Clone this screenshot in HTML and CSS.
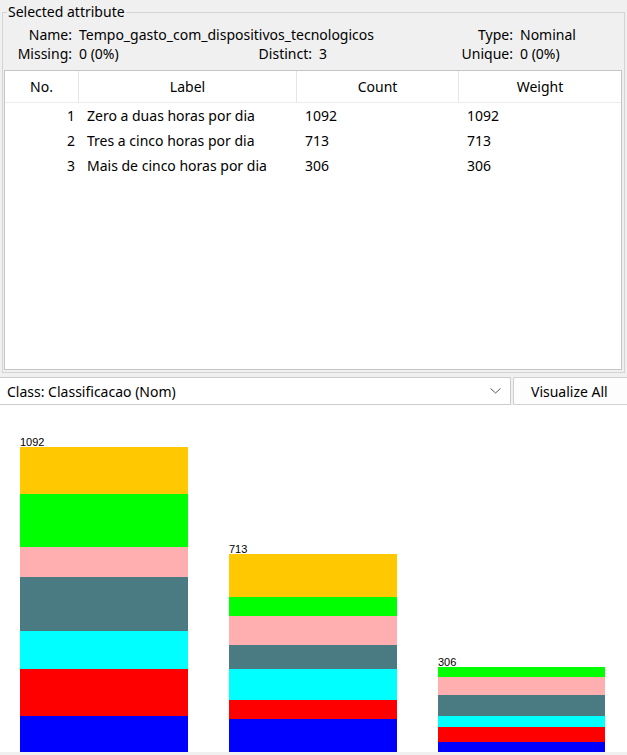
FILE: index.html
```html
<!DOCTYPE html>
<html>
<head>
<meta charset="utf-8">
<link rel="stylesheet" href="styles.css">
</head>
<body>
<div class="app">
  <fieldset class="group">
    <legend class="group-title">Selected attribute</legend>
    <div class="info">
      <span class="lbl">Name:</span><span class="val">Tempo_gasto_com_dispositivos_tecnologicos</span>
      <span></span><span></span>
      <span class="lbl">Type:</span><span class="val">Nominal</span>
      <span class="lbl">Missing:</span><span class="val">0 (0%)</span>
      <span class="lbl">Distinct:</span><span class="val">3</span>
      <span class="lbl">Unique:</span><span class="val">0 (0%)</span>
    </div>
    <div class="table">
      <div class="thead">
        <div class="th">No.</div>
        <div class="th">Label</div>
        <div class="th">Count</div>
        <div class="th last">Weight</div>
      </div>
      <div class="tr">
        <div class="td num">1</div>
        <div class="td">Zero a duas horas por dia</div>
        <div class="td">1092</div>
        <div class="td">1092</div>
      </div>
      <div class="tr">
        <div class="td num">2</div>
        <div class="td">Tres a cinco horas por dia</div>
        <div class="td">713</div>
        <div class="td">713</div>
      </div>
      <div class="tr">
        <div class="td num">3</div>
        <div class="td">Mais de cinco horas por dia</div>
        <div class="td">306</div>
        <div class="td">306</div>
      </div>
    </div>
  </fieldset>

  <div class="controls">
    <div class="combo">
      <span class="combo-text">Class: Classificacao (Nom)</span>
      <svg class="chev" width="11" height="6" viewBox="0 0 11 6"><polyline points="0.5,0.5 5.5,5 10.5,0.5" fill="none" stroke="#5a5a5a" stroke-width="1"/></svg>
    </div>
    <div class="btn">Visualize All</div>
  </div>

  <div class="chart">
    <div class="bar">
      <div class="bar-label">1092</div>
      <div class="seg orange" style="height:47px"></div>
      <div class="seg green" style="height:53px"></div>
      <div class="seg pink" style="height:30px"></div>
      <div class="seg teal" style="height:54px"></div>
      <div class="seg cyan" style="height:38px"></div>
      <div class="seg red" style="height:47px"></div>
      <div class="seg blue" style="height:36px"></div>
    </div>
    <div class="bar">
      <div class="bar-label">713</div>
      <div class="seg orange" style="height:43px"></div>
      <div class="seg green" style="height:19px"></div>
      <div class="seg pink" style="height:29px"></div>
      <div class="seg teal" style="height:24px"></div>
      <div class="seg cyan" style="height:31px"></div>
      <div class="seg red" style="height:19px"></div>
      <div class="seg blue" style="height:33px"></div>
    </div>
    <div class="bar narrow">
      <div class="bar-label">306</div>
      <div class="seg green" style="height:10px"></div>
      <div class="seg pink" style="height:18px"></div>
      <div class="seg teal" style="height:21px"></div>
      <div class="seg cyan" style="height:11px"></div>
      <div class="seg red" style="height:15px"></div>
      <div class="seg blue" style="height:10px"></div>
    </div>
  </div>
</div>
</body>
</html>
```
FILE: styles.css
```css
html, body {
  margin: 0;
  padding: 0;
  background: #f0f0f0;
}
body {
  font-family: "Noto Sans", "Open Sans", sans-serif;
  font-size: 14px;
  color: #000;
  width: 627px;
  height: 755px;
  overflow: hidden;
}
.app {
  display: flex;
  flex-direction: column;
  height: 755px;
}
.group {
  margin: 3px 2px 0 2px;
  padding: 0 2px 0 0;
  border: 1px solid #d4d4d4;
  height: 370px;
  box-sizing: border-box;
  min-width: 0;
  flex: none;
}
.group-title {
  padding: 0 1px;
  margin-left: 4px;
  line-height: 18px;
  height: 18px;
}
.info {
  display: grid;
  grid-template-columns: 69px 167px 61px 136px 53px 1fr;
  column-gap: 6px;
  grid-auto-rows: 19px;
  line-height: 19px;
  margin-top: 4px;
  margin-bottom: 7px;
  white-space: nowrap;
}
.lbl {
  text-align: right;
}
.val {
  padding-left: 1px;
}
.table {
  height: 300px;
  box-sizing: border-box;
  background: #fff;
  border: 1px solid #c4c4c4;
  margin-left: 1px;
}
.thead, .tr {
  display: grid;
  grid-template-columns: 74px 218px 162px 1fr;
}
.thead {
  height: 31px;
  border-bottom: 1px solid #ececec;
}
.th {
  border-right: 1px solid #e5e5e5;
  text-align: center;
  line-height: 31px;
}
.th.last {
  border-right: none;
}
.tr {
  height: 25px;
  line-height: 25px;
}
.td {
  padding-left: 8px;
  white-space: nowrap;
}
.td.num {
  text-align: right;
  padding-left: 0;
  padding-right: 4px;
}
.controls {
  display: flex;
  gap: 2px;
  margin-top: 4px;
  height: 28px;
  flex: none;
}
.combo {
  width: 511px;
  box-sizing: border-box;
  background: #fff;
  border: 1px solid #cccccc;
  border-left: none;
  display: flex;
  align-items: center;
  justify-content: space-between;
  padding: 0 9px 0 7px;
}
.chev {
  display: block;
}
.btn {
  flex: 1;
  background: #fdfdfd;
  border: 1px solid #d0d0d0;
  border-right: none;
  border-radius: 2px 0 0 2px;
  display: flex;
  align-items: center;
  padding-left: 17px;
}
.chart {
  background: #fff;
  height: 347px;
  flex: none;
  display: flex;
  align-items: flex-end;
  padding-left: 20px;
  gap: 41px;
}
.bar {
  width: 168px;
  display: flex;
  flex-direction: column;
}
.bar.narrow {
  width: 167px;
}
.bar-label {
  font-family: "Liberation Sans", Arial, sans-serif;
  font-size: 11px;
  line-height: 10px;
  height: 10px;
  color: #000;
}
.seg { width: 100%; }
.orange { background: #ffc800; }
.green { background: #00ff00; }
.pink { background: #ffafaf; }
.teal { background: #4b7b82; }
.cyan { background: #00ffff; }
.red { background: #ff0000; }
.blue { background: #0000ff; }
```
